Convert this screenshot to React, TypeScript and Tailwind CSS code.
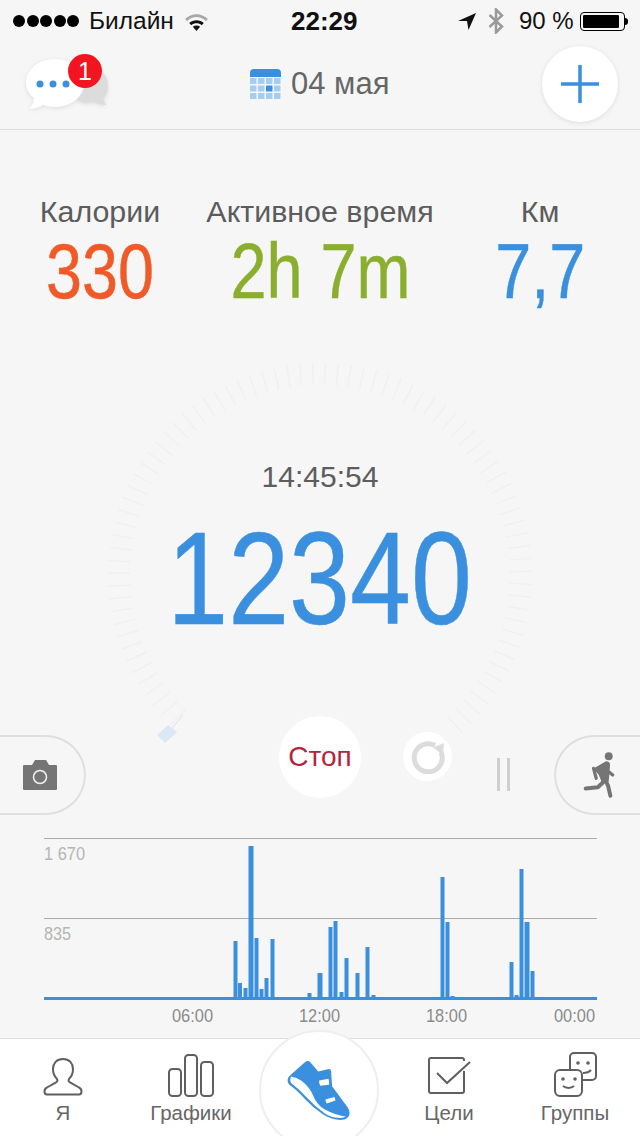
import React from 'react'

const bars = [
  [233.5, 941, 4], [238, 983, 4], [243.5, 988, 4], [248.5, 846, 5], [254.5, 938, 4], [259.5, 989, 4],
  [264.5, 978, 4], [270.5, 939, 4], [307.5, 993, 4], [317.5, 973, 5], [328.5, 927, 4], [333.5, 921, 4],
  [339.5, 992, 4], [344.5, 958, 4], [355.5, 973, 4], [365.5, 947, 4], [371.5, 995, 4], [440.5, 877, 4],
  [445.5, 922, 4], [450.5, 996, 4], [509.5, 962, 4], [514.5, 995, 4], [519.5, 869, 4], [524.5, 922, 5],
  [530.5, 971, 4],
]

// dial ticks, clockwise from the lower left round to the lower right
const ticks = Array.from({ length: 79 }, (_, i) => {
  const a = ((-135 + i * 3.5) * Math.PI) / 180
  return {
    x1: 320 + 190 * Math.sin(a),
    y1: 245 - 190 * Math.cos(a),
    x2: 320 + 212 * Math.sin(a),
    y2: 245 - 212 * Math.cos(a),
  }
})

function StatusBar() {
  return (
    <div className="h-10 pt-[2px] flex items-center text-[24px] leading-none text-[#111]">
      <div className="ml-[13px] flex gap-[1.5px]">
        {[0, 1, 2, 3, 4].map(i => (
          <span key={i} className="w-3 h-3 rounded-full bg-black" />
        ))}
      </div>
      <span className="ml-[10px] w-[95px] text-[24.5px]">Билайн</span>
      <svg width="25" height="19" viewBox="0 0 24 18">
        <path d="M1 6.500C7.500.5 16.500.5 23 6.500l-2 2C15.500 3.500 8.500 3.500 3 8.500z" fill="#a8a8a8" />
        <path d="M5 10.500c4-3.600 10-3.600 14 0l-2 2.100c-3-2.500-7-2.500-10 0z" fill="#111" />
        <path d="M8.500 14c2-1.500 5-1.500 7 0L12 18z" fill="#111" />
      </svg>
      <span className="ml-[82px] w-[167px] text-[26px] font-bold">22:29</span>
      <svg width="18" height="18" viewBox="0 0 18 18">
        <path d="M0 9L18 1l-7.500 17-1.500-9z" fill="#111" />
      </svg>
      <svg className="ml-[12px]" width="16" height="26" viewBox="0 0 16 26" fill="none" stroke="#9a9a9a" strokeWidth="2.500">
        <path d="M1.500 7l12.500 11.500-6 6V1.500l6 6L1.500 19" />
      </svg>
      <span className="ml-[15px] w-[61px]">90 %</span>
      <div className="w-[45px] h-[19px] rounded-[4px] border border-black p-[2px]">
        <div className="w-[36px] h-full bg-black rounded-[1px]" />
      </div>
      <div className="w-[3px] h-[7px] bg-black rounded-r-full" />
    </div>
  )
}

function ChatIcon() {
  return (
    <div className="relative w-[86px] h-[68px]">
      <svg className="absolute left-0 top-[-4px] drop-shadow-[0_1px_2px_rgba(0,0,0,0.1)]" width="86" height="68" viewBox="0 0 86 68">
        <path d="M60 23c12-4 24 3 24 17 0 6-2 10-5 13l3 6c-4 0-9-1-12-3-9 2-16 0-20-5z" fill="#dcdcdc" />
        <circle cx="68" cy="37" r="3" fill="#f4f4f4" />
        <path d="M31 13c16 0 29 10 29 24S47 61 31 61c-5 0-9-1-12-2-3 2-9 4-14 4 3-3 5-7 5-11C5 48 2 43 2 37 2 23 15 13 31 13z" fill="#fff" />
        <circle cx="16" cy="38" r="3.500" fill="#3a8fde" />
        <circle cx="29" cy="38" r="3.500" fill="#3a8fde" />
        <circle cx="42" cy="38" r="3.500" fill="#3a8fde" />
      </svg>
      <span className="absolute left-[44px] top-[4px] w-[34px] h-[34px] rounded-full bg-[#f2141f] text-white text-[25px] leading-[34px] text-center">
        1
      </span>
    </div>
  )
}

function CalendarIcon() {
  const cols = [0, 1, 2, 3]
  const rows = [0, 1, 2]
  return (
    <svg width="31" height="31" viewBox="0 0 31 31">
      <path d="M0 8V4a4 4 0 014-4h23a4 4 0 014 4v4z" fill="#3a8fde" />
      {rows.map(r =>
        cols.map(c => (
          <rect
            key={`${r}-${c}`}
            x={c * 8}
            y={9 + r * 7.500}
            width="6.500"
            height="6"
            rx="0.500"
            fill={r === 1 && c === 2 ? '#3a8fde' : '#a5cdf1'}
          />
        )),
      )}
    </svg>
  )
}

function Header() {
  return (
    <div className="h-[90px] border-b border-[#dedede] flex items-center relative">
      <div className="ml-[24px] -mt-[1px]">
        <ChatIcon />
      </div>
      <div className="ml-[140px] flex items-center gap-[10px]">
        <CalendarIcon />
        <span className="text-[31px] leading-none text-[#666] mt-[-2px]">04 мая</span>
      </div>
      <button className="ml-auto mr-[22px] mt-[-2px] w-[76px] h-[76px] rounded-full bg-white shadow-[0_1px_5px_rgba(0,0,0,0.1)] flex items-center justify-center">
        <svg width="38" height="38" viewBox="0 0 38 38">
          <path d="M0 19h38M19 0v38" stroke="#3a8fde" strokeWidth="3.500" />
        </svg>
      </button>
    </div>
  )
}

function Stat({ label, value, color }: { label: string; value: string; color: string }) {
  return (
    <div className="flex flex-col items-center">
      <div className="text-[30.4px] leading-[34px] mt-[-1px] text-[#5c5c5c] whitespace-nowrap">{label}</div>
      <div className={`text-[78px] leading-[78px] mt-[4px] whitespace-nowrap scale-x-[0.83] [-webkit-text-stroke:0.5px] ${color}`}>{value}</div>
    </div>
  )
}

function Dial() {
  return (
    <div className="relative h-[386px] flex flex-col items-center">
      <svg className="absolute left-0 top-0 overflow-visible" width="640" height="386" viewBox="0 0 640 386">
        {ticks.map((t, i) => (
          <line key={i} x1={t.x1} y1={t.y1} x2={t.x2} y2={t.y2} stroke="#f0f0f0" strokeWidth="1.500" />
        ))}
        <path d="M157 405l11-10 9 7-12 11z" fill="#dbe8f3" />
        <path d="M172 398l11-13" stroke="#e2ebf2" strokeWidth="1.500" />
      </svg>
      <div className="mt-[130px] text-[30px] leading-[34px] text-[#5c5c5c] relative">14:45:54</div>
      <div className="mt-[10px] text-[132px] leading-[150px] text-[#3a90df] scale-x-[0.83] [-webkit-text-stroke:0.5px] relative">12340</div>
    </div>
  )
}

function CameraIcon() {
  return (
    <svg width="34" height="30" viewBox="0 0 34 30">
      <path d="M1 5h8l3-5h11l3 5h7a1 1 0 011 1v23a1 1 0 01-1 1H1a1 1 0 01-1-1V6a1 1 0 011-1z" fill="#757575" />
      <circle cx="17" cy="17" r="6.500" fill="none" stroke="#f2f2f2" strokeWidth="1.500" />
    </svg>
  )
}

function RunnerIcon() {
  return (
    <svg width="33" height="50" viewBox="790 150 100 150" fill="none" stroke="#757575" strokeLinecap="round" strokeLinejoin="round">
      <circle cx="868" cy="168" r="12" fill="#757575" stroke="none" />
      <path d="M822 205L860 183Q872 183 872 195L868 245L848 250L838 225Z" fill="#757575" stroke="none" />
      <path d="M868 215L880 225" strokeWidth="10" />
      <path d="M822 205L830 235" strokeWidth="10" />
      <path d="M858 240L835 262L798 266" strokeWidth="12" />
      <path d="M858 240L866 258L873 288" strokeWidth="12" />
    </svg>
  )
}

function Controls() {
  return (
    <div className="h-[100px] flex items-start">
      <div className="mt-[19px] w-[86px] h-[80px] rounded-r-[40px] border-2 border-l-0 border-[#dfdfdf] flex items-center justify-center">
        <div className="ml-[-4px]">
          <CameraIcon />
        </div>
      </div>
      <button className="ml-[193px] w-[82px] h-[82px] rounded-full bg-white text-[#b3253f] text-[28px] leading-none">
        Стоп
      </button>
      <div className="ml-[42px] mt-[16px] w-[49px] h-[49px] rounded-full bg-white flex items-center justify-center">
        <svg width="34" height="34" viewBox="0 0 34 34" fill="none">
          <path d="M24 5.500A14 14 0 1030 12" stroke="#dcdcdc" strokeWidth="5" />
          <path d="M22 7.500L33 3l-1 12z" fill="#dcdcdc" />
        </svg>
      </div>
      <div className="ml-[45px] mt-[42px] flex gap-[7px]">
        <div className="w-[3px] h-[33px] bg-[#cfcfcf]" />
        <div className="w-[3px] h-[33px] bg-[#cfcfcf]" />
      </div>
      <div className="ml-auto mt-[19px] w-[86px] h-[80px] rounded-l-[40px] border-2 border-r-0 border-[#dfdfdf] flex items-center">
        <div className="ml-[27px]">
          <RunnerIcon />
        </div>
      </div>
    </div>
  )
}

function Chart() {
  return (
    <svg className="block" width="640" height="222" viewBox="0 816 640 222">
      <line x1="44" y1="838.500" x2="597" y2="838.500" stroke="#ababab" />
      <line x1="44" y1="918.500" x2="597" y2="918.500" stroke="#ababab" />
      {bars.map(([x, top, w]) => (
        <rect key={x} x={x} y={top} width={w} height={998 - top} fill="#3a8fde" />
      ))}
      <rect x="44" y="997" width="553" height="3" fill="#3a8fde" />
      <g fontFamily="Liberation Sans" fontSize="19">
        <text x="44" y="860" fill="#b5b5b5" textLength="41" lengthAdjust="spacingAndGlyphs">1 670</text>
        <text x="44" y="940" fill="#b5b5b5" textLength="27" lengthAdjust="spacingAndGlyphs">835</text>
        <text x="172" y="1022" fill="#8a8a8a" textLength="41" lengthAdjust="spacingAndGlyphs">06:00</text>
        <text x="299" y="1022" fill="#8a8a8a" textLength="41" lengthAdjust="spacingAndGlyphs">12:00</text>
        <text x="426" y="1022" fill="#8a8a8a" textLength="41" lengthAdjust="spacingAndGlyphs">18:00</text>
        <text x="554" y="1022" fill="#8a8a8a" textLength="41" lengthAdjust="spacingAndGlyphs">00:00</text>
      </g>
    </svg>
  )
}

function TabItem({ label, width, icon }: { label: string; width: string; icon: React.ReactNode }) {
  return (
    <div className={`flex flex-col items-center ${width}`}>
      <div className="h-[58px] flex items-end">{icon}</div>
      <span className="mt-[4px] text-[20.5px] leading-[24px] text-[#666]">{label}</span>
    </div>
  )
}

function TabBar() {
  return (
    <div className="relative h-[98px] bg-white border-t border-[#dedede] flex">
      <TabItem
        label="Я"
        width="w-[126px]"
        icon={
          <svg width="40" height="40" viewBox="0 0 40 40" fill="none" stroke="#5f5f5f" strokeWidth="2">
            <path d="M20 2c-6.500 0-10 4.500-10 10 0 4 1.500 7.500 4 10 .8 1 .5 2.500-1 3.300L4 30.500c-1.500.8-2.500 2.200-2.500 4 0 1.800.8 3 2.500 3h32c1.700 0 2.500-1.200 2.500-3 0-1.800-1-3.200-2.500-4l-9-5.200c-1.500-.8-1.800-2.300-1-3.300 2.500-2.500 4-6 4-10 0-5.500-3.500-10-10-10z" />
          </svg>
        }
      />
      <TabItem
        label="Графики"
        width="w-[130px]"
        icon={
          <svg width="46" height="43" viewBox="0 0 46 43" fill="none" stroke="#5f5f5f" strokeWidth="2">
            <rect x="1" y="15" width="12" height="27" rx="3.500" />
            <rect x="17" y="1" width="12" height="41" rx="3.500" />
            <rect x="33" y="8" width="12" height="34" rx="3.500" />
          </svg>
        }
      />
      <div className="w-[126px]" />
      <TabItem
        label="Цели"
        width="w-[134px]"
        icon={
          <svg className="overflow-visible" width="42" height="40" viewBox="0 0 42 40" fill="none" stroke="#5f5f5f" strokeWidth="2">
            <path d="M36 14v20a2 2 0 01-2 2H3a2 2 0 01-2-2V3a2 2 0 012-2h31a2 2 0 012 2v1" />
            <path d="M9 16l10 10L42 5" />
          </svg>
        }
      />
      <TabItem
        label="Группы"
        width="w-[118px]"
        icon={
          <svg width="44" height="45" viewBox="0 0 44 45" fill="none" stroke="#5f5f5f" strokeWidth="2">
            <path d="M17 18V5a4 4 0 014-4h18a4 4 0 014 4v19a4 4 0 01-4 4h-10" />
            <rect x="2" y="18" width="27" height="26" rx="5" />
            <circle cx="10" cy="27" r="1.800" fill="#5f5f5f" stroke="none" />
            <circle cx="22" cy="27" r="1.800" fill="#5f5f5f" stroke="none" />
            <path d="M10 34c3 2.500 8 2.500 11 0" />
            <circle cx="25" cy="11" r="1.800" fill="#5f5f5f" stroke="none" />
            <circle cx="35" cy="11" r="1.800" fill="#5f5f5f" stroke="none" />
            <path d="M30 21c3 0 6-.8 8-3" />
          </svg>
        }
      />
      {/* raised middle button, sticks out above the bar */}
      <div className="absolute left-[259px] top-[-9px] w-[120px] h-[120px] rounded-full bg-white border-2 border-[#eeeeee] flex items-start justify-center">
        <svg className="mt-[26px]" width="68" height="65" viewBox="90 85 205 195">
          <path d="M98 150Q100 140 110 133L150 97Q160 90 167 98L190 125L222 118Q229 118 229 125L232 170L278 232Q288 246 283 258Q278 270 262 271Q235 273 205 255Q175 235 150 208Q125 180 103 165Q96 158 98 150Z" fill="#3a8fde" />
          <path d="M108 140Q125 142 140 153Q165 173 175 198Q185 224 210 240Q240 256 274 262Q265 266 250 265Q228 264 208 250Q180 230 157 205Q132 178 108 160Q103 150 108 140Z" fill="#fff" />
          <path d="M193 152l28-5q3 8 2 18l-27 3q-4-8-3-16zM212 210l27-8q3 6 3 11l-26 9q-4-6-4-12z" fill="#fff" />
        </svg>
      </div>
    </div>
  )
}

export default function App() {
  return (
    <div className="w-[640px] h-[1136px] overflow-hidden flex flex-col bg-[#f6f6f6] font-['Liberation_Sans',sans-serif]">
      <StatusBar />
      <Header />
      <div className="h-[200px] pt-[65px] grid grid-cols-[200px_240px_200px]">
        <Stat label="Калории" value="330" color="text-[#f05a28]" />
        <Stat label="Активное время" value="2h 7m" color="text-[#8aae2e]" />
        <Stat label="Км" value="7,7" color="text-[#3a90df]" />
      </div>
      <Dial />
      <Controls />
      <Chart />
      <TabBar />
    </div>
  )
}
